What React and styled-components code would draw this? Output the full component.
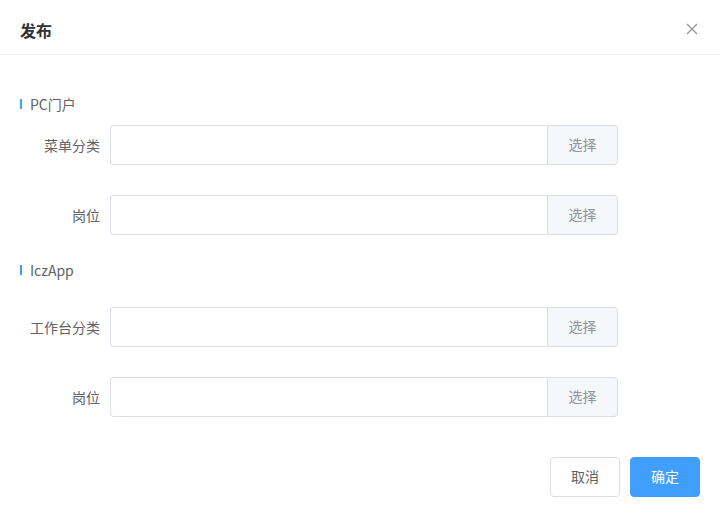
import React from "react";
import styled, { createGlobalStyle } from "styled-components";

const Global = createGlobalStyle`
  html, body { margin: 0; padding: 0; background: #fff; }
  body { font-family: "Noto Sans CJK SC", "Noto Sans", sans-serif; -webkit-font-smoothing: antialiased; }
  * { box-sizing: border-box; }
`;

const Dialog = styled.div`
  width: 720px;
  height: 517px;
  background: #fff;
  display: flex;
  flex-direction: column;
`;

const Header = styled.div`
  height: 55px;
  padding: 0 20px;
  border-bottom: 1px solid #ebeef5;
  display: flex;
  align-items: center;
  justify-content: space-between;
`;

const Title = styled.span`
  font-size: 16px;
  font-weight: 700;
  color: #303133;
  line-height: 24px;
  margin-top: 5px;
`;

const Close = styled.button`
  border: none;
  background: transparent;
  padding: 0;
  width: 14px;
  height: 14px;
  display: flex;
  align-items: center;
  justify-content: center;
  margin-right: 1px;
  margin-top: 4px;
  cursor: pointer;
`;

const Body = styled.div`
  flex: 1;
  padding: 0 20px;
`;

const SectionTitle = styled.div`
  display: flex;
  align-items: center;
  height: 20px;
  margin-top: ${(p) => p.$top}px;
  margin-bottom: ${(p) => p.$bottom}px;
  font-size: 14px;
  color: #606266;
  &::before {
    content: "";
    width: 2px;
    height: 10px;
    background: #409eff;
    margin-right: 8px;
  }
`;

const Row = styled.div`
  display: flex;
  align-items: center;
  height: 40px;
  & + & { margin-top: 30px; }
`;

const Label = styled.label`
  width: 90px;
  padding-right: 10px;
  text-align: right;
  font-size: 14px;
  color: #606266;
  white-space: nowrap;
`;

const Group = styled.div`
  display: flex;
  width: 508px;
  height: 40px;
`;

const Input = styled.input`
  flex: 1;
  min-width: 0;
  height: 40px;
  border: 1px solid #dcdfe6;
  border-right: none;
  border-radius: 4px 0 0 4px;
  padding: 0 15px;
  font-size: 14px;
  outline: none;
  background: #fff;
`;

const Append = styled.button`
  width: 71px;
  height: 40px;
  border: 1px solid #dcdfe6;
  border-radius: 0 4px 4px 0;
  background: #f5f7fa;
  color: #909399;
  font-family: inherit;
  font-size: 14px;
  padding: 0 0 2px;
  cursor: pointer;
`;

const Footer = styled.div`
  display: flex;
  justify-content: flex-end;
  gap: 10px;
  padding: 0 20px 20px;
`;

const Btn = styled.button`
  width: 70px;
  height: 40px;
  border-radius: 4px;
  font-family: inherit;
  font-size: 14px;
  padding: 0 0 2px;
  cursor: pointer;
  border: 1px solid ${(p) => (p.$primary ? "#409eff" : "#dcdfe6")};
  background: ${(p) => (p.$primary ? "#409eff" : "#fff")};
  color: ${(p) => (p.$primary ? "#fff" : "#606266")};
`;

const Field = ({ label }) => (
  <Row>
    <Label>{label}</Label>
    <Group>
      <Input />
      <Append>选择</Append>
    </Group>
  </Row>
);

export default function App() {
  return (
    <>
      <Global />
      <Dialog>
        <Header>
          <Title>发布</Title>
          <Close aria-label="close">
            <svg width="12" height="12" viewBox="0 0 12 12">
              <path d="M1 1L11 11M11 1L1 11" stroke="#909399" strokeWidth="1.2" />
            </svg>
          </Close>
        </Header>
        <Body>
          <SectionTitle $top={39} $bottom={11}>PC门户</SectionTitle>
          <Field label="菜单分类" />
          <Field label="岗位" />
          <SectionTitle $top={25} $bottom={27}>IczApp</SectionTitle>
          <Field label="工作台分类" />
          <Field label="岗位" />
        </Body>
        <Footer>
          <Btn>取消</Btn>
          <Btn $primary>确定</Btn>
        </Footer>
      </Dialog>
    </>
  );
}
